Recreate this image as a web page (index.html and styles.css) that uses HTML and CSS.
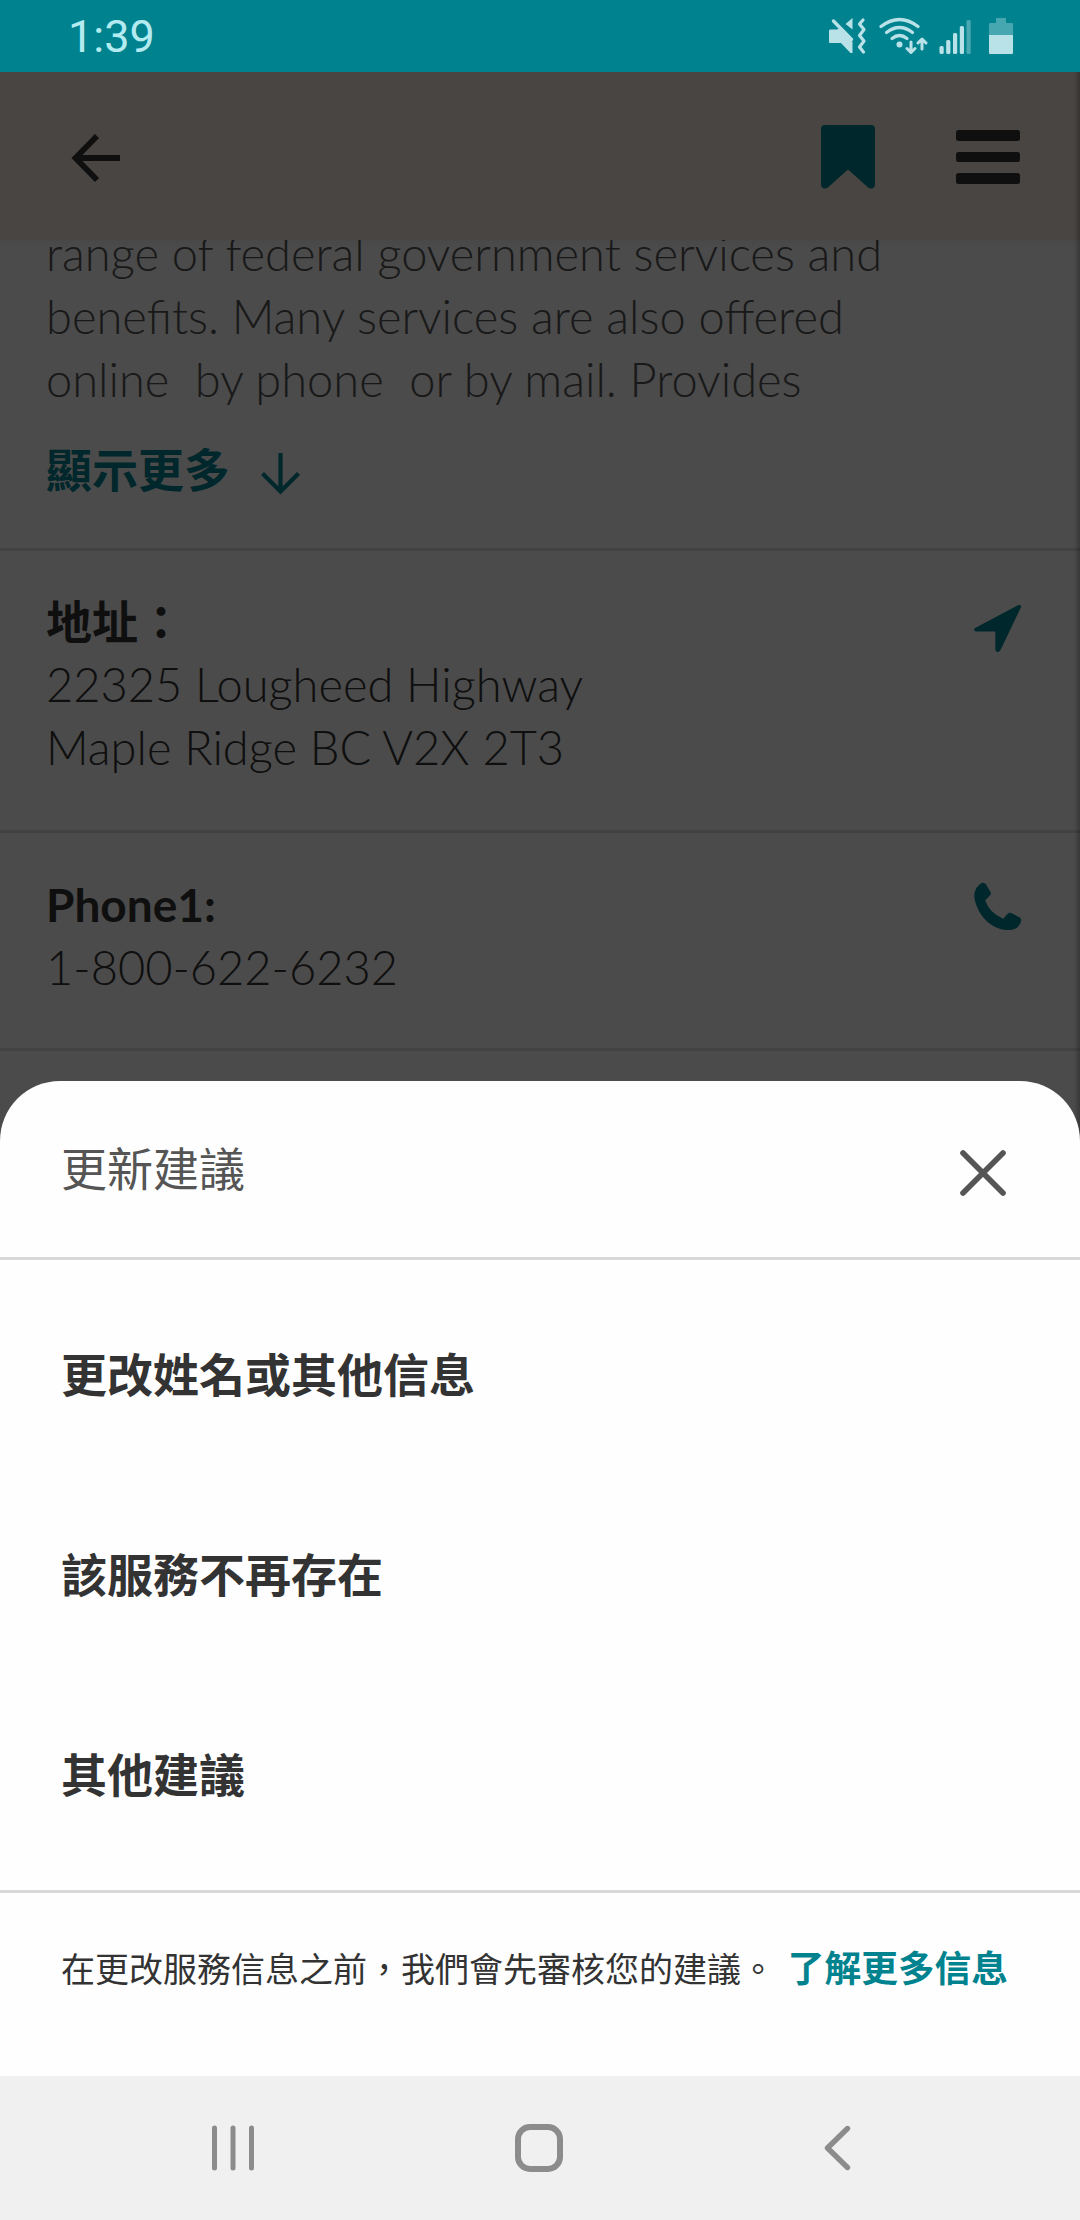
FILE: index.html
```html
<!DOCTYPE html>
<html lang="zh-Hant">
<head>
<meta charset="utf-8">
<title>更新建議</title>
<link rel="stylesheet" href="styles.css">
</head>
<body>
<div class="screen">
  <header class="status-bar">
    <span class="clock">1:39</span>
    <div class="status-icons">
      <svg class="icon-mute" viewBox="829 17 38 38">
        <path fill="currentColor" d="M830 29.500h7l2-1L852.500 42v11l-2 0-9.500-10h-11q-1 0-1-1V31q0-1.500 1-1.500z"/>
        <path fill="currentColor" d="M852.500 18v11.500L845.500 24z"/>
        <path fill="none" stroke="currentColor" stroke-width="3.400" stroke-linecap="round" d="M833.500 21l18 18.500"/>
        <path fill="none" stroke="currentColor" stroke-width="3.200" stroke-linecap="round" stroke-linejoin="round" d="M863 20l-3.500 4 4.500 5.500-4.500 6 4.500 5.500-4.500 6 4 5"/>
      </svg>
      <svg class="icon-wifi" viewBox="878 16 50 38">
        <g fill="none" stroke="currentColor" stroke-width="3.200" stroke-linecap="round">
          <path d="M881 26.500Q899.500 12.500 918 26.500"/>
          <path d="M886.500 32.500Q899.500 22.500 912.500 32.500"/>
          <path d="M892 38.500Q899.500 32.500 907 38.500"/>
          <path stroke-width="3" stroke-linejoin="round" d="M911 42v10M907 48.500l4 4 4-4M922 49V39.500M918 43l4-4 4 4"/>
        </g>
        <circle cx="899.500" cy="44.500" r="3" fill="currentColor"/>
      </svg>
      <svg class="icon-signal" viewBox="938 18 34 37">
        <g fill="currentColor">
          <rect x="939.500" y="46" width="4.200" height="8" rx="1.500"/>
          <rect x="946.200" y="40" width="4.200" height="14" rx="1.500"/>
          <rect x="953" y="33" width="4.200" height="21" rx="1.500"/>
          <rect x="959.800" y="26" width="4.200" height="28" rx="1.500"/>
          <rect x="966.500" y="20" width="4.200" height="34" rx="1.500" opacity=".4"/>
        </g>
      </svg>
      <svg class="icon-battery" viewBox="988 17 26 38">
        <path fill="currentColor" opacity=".38" d="M996 18h10v5h6q1 0 1 1v11h-24V24q0-1 1-1h6z"/>
        <path fill="currentColor" d="M989 35h24v18q0 1-1 1h-22q-1 0-1-1z"/>
      </svg>
    </div>
  </header>

  <div class="page">
    <nav class="app-bar">
      <svg class="icon-back" viewBox="70 132 52 52"><path fill="none" stroke="currentColor" stroke-width="5.800" d="M120 158H76M97 136L75.500 158 97 180"/></svg>
      <div class="app-actions">
        <svg class="icon-bookmark" viewBox="820 124 56 66"><path fill="currentColor" d="M825 125h46q4 0 4 4v55q0 4.500-4 4.500-2 0-4-2L848 169.500 829 186.500q-2 2-4 2-4 0-4-4.500V129q0-4 4-4z"/></svg>
        <div class="menu-button"><i></i><i></i><i></i></div>
      </div>
    </nav>

    <section class="row description">
      <p class="line line-a">range of federal government services and</p>
      <p class="line line-b">benefits. Many services are also offered</p>
      <p class="line line-c">online  by phone  or by mail. Provides</p>
      <div class="show-more">
        <span>顯示更多</span>
        <svg viewBox="258 451 43 44"><path fill="none" stroke="currentColor" stroke-width="4.200" d="M279.500 453v38M261.500 473.500l18 18 18-18"/></svg>
      </div>
    </section>

    <section class="row address">
      <div>
        <h2 class="line label">地址：</h2>
        <p class="line line-d">22325 Lougheed Highway</p>
        <p class="line line-e">Maple Ridge BC V2X 2T3</p>
      </div>
      <svg class="row-icon" viewBox="973 604 49 49"><path fill="currentColor" d="M1018.500 605q3.500-.5 2.300 2.600L1000.500 650q-1.200 2.400-3.500 2-1.700-.5-1.700-3V631.500h-19q-2.300 0-2.300-1.800 0-1.200 2-2.200z"/></svg>
    </section>

    <section class="row phone">
      <div>
        <h2 class="line label line-f">Phone1:</h2>
        <p class="line line-g">1-800-622-6232</p>
      </div>
      <svg class="row-icon" viewBox="973 882 49 49"><path fill="currentColor" d="M981.500 883q3-.8 4.600 1.500l4.400 7.500q1 2-.7 3.800l-4.600 4.400q3.600 12 18 18.600l4.500-5q1.500-1.600 3.500-.7l8.500 4.400q2 1.200 1.200 4-1.500 6-8 8-7 1.500-14-1Q981 922 975 901q-3-12 6.500-18z"/></svg>
    </section>
  </div>

  <div class="scrim"></div>

  <section class="sheet">
    <div class="sheet-header">
      <h1>更新建議</h1>
      <svg class="icon-close" viewBox="959 1149 48 48"><path stroke="currentColor" stroke-width="5.600" stroke-linecap="round" d="M963 1153l40 40M1003 1153l-40 40"/></svg>
    </div>
    <ul class="options">
      <li>更改姓名或其他信息</li>
      <li>該服務不再存在</li>
      <li>其他建議</li>
    </ul>
    <footer class="sheet-footer">
      <span>在更改服務信息之前，我們會先審核您的建議。</span>
      <a>了解更多信息</a>
    </footer>
  </section>

  <nav class="system-nav">
    <svg class="nav-recents" viewBox="211 2123 44 48"><path stroke="currentColor" stroke-width="5" stroke-linecap="round" d="M214.500 2127v40M233 2127v40M251.500 2127v40"/></svg>
    <svg class="nav-home" viewBox="510 2122 50 50"><rect x="514" y="2126" width="42" height="42" rx="12" fill="none" stroke="currentColor" stroke-width="6"/></svg>
    <svg class="nav-back" viewBox="823 2123 30 48"><path fill="none" stroke="currentColor" stroke-width="5.400" stroke-linecap="round" stroke-linejoin="round" d="M847.500 2127.500L827.500 2147l20 19.500"/></svg>
  </nav>
</div>
</body>
</html>
```

FILE: styles.css
```css
* { box-sizing: border-box; margin: 0; padding: 0; }

body {
  width: 1080px;
  height: 2220px;
  overflow: hidden;
  font-family: Lato, "Noto Sans CJK TC", sans-serif;
  background: #fff;
}

svg { display: block; flex: none; }

.screen {
  position: relative;
  display: flex;
  flex-direction: column;
  height: 2220px;
}

/* status bar */
.status-bar {
  display: flex;
  justify-content: space-between;
  height: 72px;
  padding: 0 66px 0 68px;
  background: #00838f;
  color: #b9e2e8;
}
.clock { font: 400 45px/72px Roboto, sans-serif; color: #b4ebf1; padding-top: 1px; }
.status-icons { display: flex; padding-top: 17px; }
.icon-mute { width: 38px; height: 38px; margin-right: 11px; }
.icon-wifi { width: 50px; height: 38px; margin: -1px 10px 0 0; }
.icon-signal { width: 34px; height: 37px; margin: 1px 16px 0 0; }
.icon-battery { width: 26px; height: 38px; }

/* page behind the sheet */
.page {
  height: 2004px;
  overflow: hidden;
  background: #fafafa;
  color: #333;
}
.app-bar {
  position: relative;
  z-index: 1;
  display: flex;
  justify-content: space-between;
  align-items: flex-start;
  height: 168px;
  padding: 52px 60px 0 70px;
  background: #f2e6dc;
  box-shadow: 0 0 8px rgba(0, 0, 0, .08);
}
.icon-back { width: 52px; height: 52px; margin-top: 8px; }
.app-actions { display: flex; }
.icon-bookmark { width: 56px; height: 66px; margin-right: 80px; color: #00838f; }
.menu-button {
  display: flex;
  flex-direction: column;
  gap: 11px;
  width: 64px;
  padding-top: 6px;
}
.menu-button i { height: 10.600px; border-radius: 2.500px; background: #333; }

.row {
  display: flex;
  justify-content: space-between;
  align-items: flex-start;
  padding-left: 46px;
  border-bottom: 3px solid #dcdcdc;
}
.line {
  font-size: 47px;
  line-height: 63px;
  font-weight: 300;
  white-space: pre;
}
.label { font-size: 46px; font-weight: 700; }

.description {
  flex-direction: column;
  justify-content: flex-start;
  height: 329px;
  margin-top: -18px;
}
.description .line { color: #555; }
.show-more {
  display: flex;
  align-items: center;
  gap: 29px;
  margin-top: 27px;
  color: #00838f;
  font-size: 46px;
  font-weight: 700;
  line-height: 63px;
}
.show-more svg { width: 43px; height: 44px; margin-top: 6px; }

.address { height: 282px; padding-top: 39px; }
.phone { height: 218px; padding-top: 40px; }
.row-icon { width: 49px; height: 49px; margin: 14px 58px 0 0; color: #00838f; }
.phone .row-icon { margin-top: 9px; }

.scrim {
  position: absolute;
  inset: 72px 0 144px;
  z-index: 2;
  background: linear-gradient(to left, rgba(0, 0, 0, .25), transparent 6px), rgba(0, 0, 0, .7);
}

/* bottom sheet */
.sheet {
  position: absolute;
  left: 0;
  right: 0;
  bottom: 144px;
  z-index: 3;
  height: 995px;
  border-radius: 60px 60px 0 0;
  background: #fefefe;
}
.sheet-header {
  display: flex;
  justify-content: space-between;
  align-items: flex-start;
  height: 179px;
  padding: 56px 73px 0 61px;
  border-bottom: 3px solid #d8d8d8;
}
.sheet-header h1 {
  font-size: 46px;
  font-weight: 400;
  line-height: 63px;
  color: #555;
}
.icon-close { width: 48px; height: 48px; margin-top: 12px; color: #555; }
.options {
  height: 633px;
  padding: 15px 61px;
  border-bottom: 3px solid #d8d8d8;
  list-style: none;
}
.options li {
  height: 200px;
  font-size: 46px;
  font-weight: 700;
  line-height: 200px;
  color: #333;
}
.sheet-footer {
  display: flex;
  align-items: baseline;
  justify-content: space-between;
  padding: 44px 72px 0 61px;
  font-size: 34px;
  line-height: 63px;
  color: #333;
  white-space: nowrap;
}
.sheet-footer a { font-size: 36.700px; font-weight: 700; color: #00838f; }

/* system navigation */
.system-nav {
  display: flex;
  align-items: center;
  height: 144px;
  padding: 0 227px 0 211px;
  justify-content: space-between;
  background: #f0f0f0;
  color: #8c8c8c;
}
.nav-recents { width: 44px; height: 48px; }
.nav-home { width: 50px; height: 50px; }
.nav-back { width: 30px; height: 48px; }
```
